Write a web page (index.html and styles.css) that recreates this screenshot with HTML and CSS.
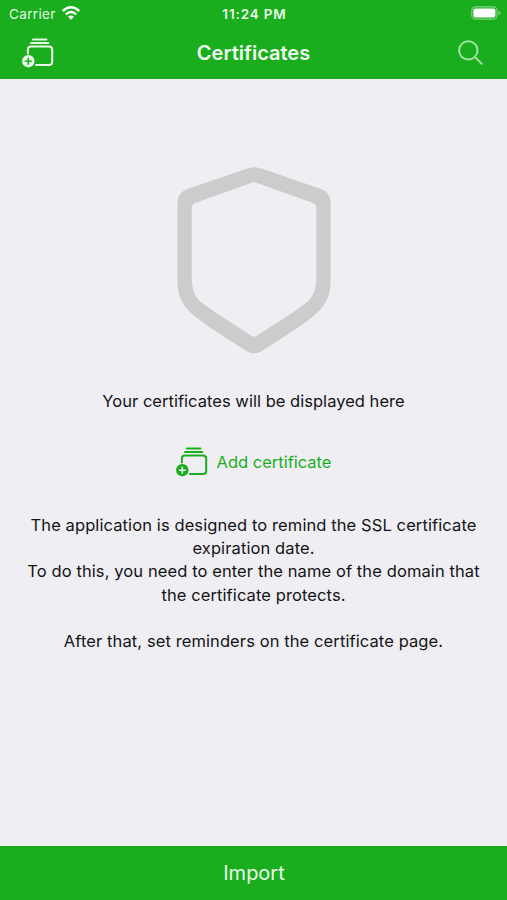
FILE: index.html
```html
<!DOCTYPE html>
<html lang="en">
<head>
  <meta charset="UTF-8" />
  <meta name="viewport" content="width=device-width, initial-scale=1.0"/>
  <title>Certificates</title>
  <link rel="stylesheet" href="styles.css">
</head>
<body>
  <!-- shared icon: stack of cards with a plus badge -->
  <svg class="sprite">
    <symbol id="add-card" viewBox="0 0 32 30">
      <path class="line" d="M11 1.6H24.4M9 5H26.4"/>
      <path class="line" d="M5.9 15.5V11.7Q5.9 8.5 9.1 8.5H26.9Q30.2 8.5 30.2 11.7V23.7Q30.2 27 26.9 27H14"/>
      <circle class="dot" cx="6.3" cy="23.2" r="6.2"/>
      <path class="plus" d="M6.3 19.7V26.7M2.8 23.2H9.8"/>
    </symbol>
  </svg>

  <header class="top">
    <div class="status">
      <div class="carrier">
        <span>Carrier</span>
        <svg class="wifi" viewBox="0 0 18 14">
          <path d="M.8 5Q9-2.3 17.2 5M3.8 8.4Q9 3.8 14.2 8.4"/>
          <path class="wifi-dot" d="M6 10.7Q9 8.2 12 10.7L9 13.7Z"/>
        </svg>
      </div>
      <span class="time">11:24 PM</span>
      <svg class="battery" viewBox="0 0 30 14">
        <rect class="shell" x=".8" y=".8" width="25.2" height="12.4" rx="3.6"/>
        <rect class="level" x="2.4" y="2.4" width="22" height="9.2" rx="2"/>
        <path class="tip" d="M27.6 4.8Q29.6 5.4 29.6 7T27.6 9.2Z"/>
      </svg>
    </div>
    <nav class="nav">
      <svg class="icon-add nav-add"><use href="#add-card"/></svg>
      <h1>Certificates</h1>
      <svg class="search" viewBox="0 0 26 26">
        <circle cx="10.3" cy="10.4" r="9.2"/>
        <path d="M16.9 17L23.8 23.9"/>
      </svg>
    </nav>
  </header>

  <main class="content">
    <svg class="shield" viewBox="37 37 459 560">
      <path fill-rule="evenodd" d="M244 42Q267 33 291 42L469 104Q496 116 496 145V375C496 418 485 448 455 474C410 513 342 555 286 590Q267 600 248 590C192 555 123 513 78 474C48 448 37 418 37 375V145Q37 116 65 104Z
        M260 84L90 145Q80 149 80 160V370C80 405 91 429 114 446C162 482 212 512 259 542Q267 547 275 542C322 512 372 482 420 446C442 429 453 405 453 370V160Q453 149 443 145L274 84Q267 82 260 84Z"/>
    </svg>
    <p class="empty">Your certificates will be displayed here</p>
    <a class="add" href="#">
      <svg class="icon-add"><use href="#add-card"/></svg>
      <span>Add certificate</span>
    </a>
    <p class="about">
      The application is designed to remind the SSL certificate<br>
      expiration date.<br>
      To do this, you need to enter the name of the domain that<br>
      the certificate protects.<br>
      <br>
      After that, set reminders on the certificate page.
    </p>
  </main>

  <button class="import">Import</button>
</body>
</html>
```
FILE: styles.css
```css
:root {
  --green: #1aae1f;
  --background: #efeef3;
  --text: #141416;
  --gray: #cccccc;
}
* { box-sizing: border-box; margin: 0; padding: 0; }
body {
  height: 900px;
  display: flex;
  flex-direction: column;
  background: var(--background);
  color: var(--text);
  font-family: Inter, "Liberation Sans", sans-serif;
  font-size: 16.5px;
}
.sprite { display: none; }
svg { display: block; flex: none; }

/* top bar */
.top {
  height: 79px;
  background: var(--green);
  color: #fff;
}
.status {
  height: 27px;
  padding: 0 6px 0 9px;
  display: grid;
  grid-template-columns: 1fr auto 1fr;
  align-items: center;
  font-size: 13.5px;
}
.carrier {
  display: flex;
  align-items: center;
  gap: 6px;
  color: #e4f7e4;
  letter-spacing: 0.35px;
}
.wifi { width: 18px; height: 14px; margin-top: -1px; }
.wifi path { fill: none; stroke: #fff; stroke-width: 2.4; }
.wifi .wifi-dot { fill: #fff; stroke: none; }
.time { font-weight: 600; font-size: 13.5px; letter-spacing: 0.85px; color: #e9f9e9; margin-right: 1px; }
.battery { width: 30px; height: 14px; justify-self: end; margin-top: -1px; }
.shell { fill: none; stroke: #7fd482; stroke-width: 1.2; }
.level { fill: #fff; }
.tip { fill: #7fd482; }
.nav {
  height: 52px;
  padding: 0 23px;
  display: grid;
  grid-template-columns: 1fr auto 1fr;
  align-items: center;
}
.nav h1 { font-size: 20px; font-weight: 600; color: #f0fcf0; }
.search {
  width: 26px;
  height: 26px;
  justify-self: end;
  fill: none;
  stroke: #a0e2a2;
  stroke-width: 2;
  stroke-linecap: round;
}

.icon-add {
  width: 32px;
  height: 30px;
  --ink: var(--green);
  --hole: var(--background);
}
.nav-add { --ink: #e8fae8; --hole: var(--green); margin-left: -1px; }
.line { fill: none; stroke: var(--ink); stroke-width: 2; stroke-linecap: round; }
.dot { fill: var(--ink); }
.plus { fill: none; stroke: var(--hole); stroke-width: 1.6; }

/* empty state */
.content {
  flex: 1;
  padding-top: 88px;
  display: flex;
  flex-direction: column;
  align-items: center;
  text-align: center;
  line-height: 23.25px;
}
.shield { width: 154px; height: 187px; fill: var(--gray); }
.empty { margin-top: 35.5px; letter-spacing: 0.03px; }
.add {
  margin-top: 34.5px;
  display: flex;
  align-items: center;
  gap: 9px;
  color: var(--green);
  text-decoration: none;
}
.about {
  margin-top: 36.5px;
  white-space: nowrap;
  letter-spacing: 0.1px;
}

.import {
  height: 54px;
  padding-left: 1px;
  border: none;
  background: var(--green);
  color: #e9fae9;
  font-family: inherit;
  font-size: 20px;
}
```
